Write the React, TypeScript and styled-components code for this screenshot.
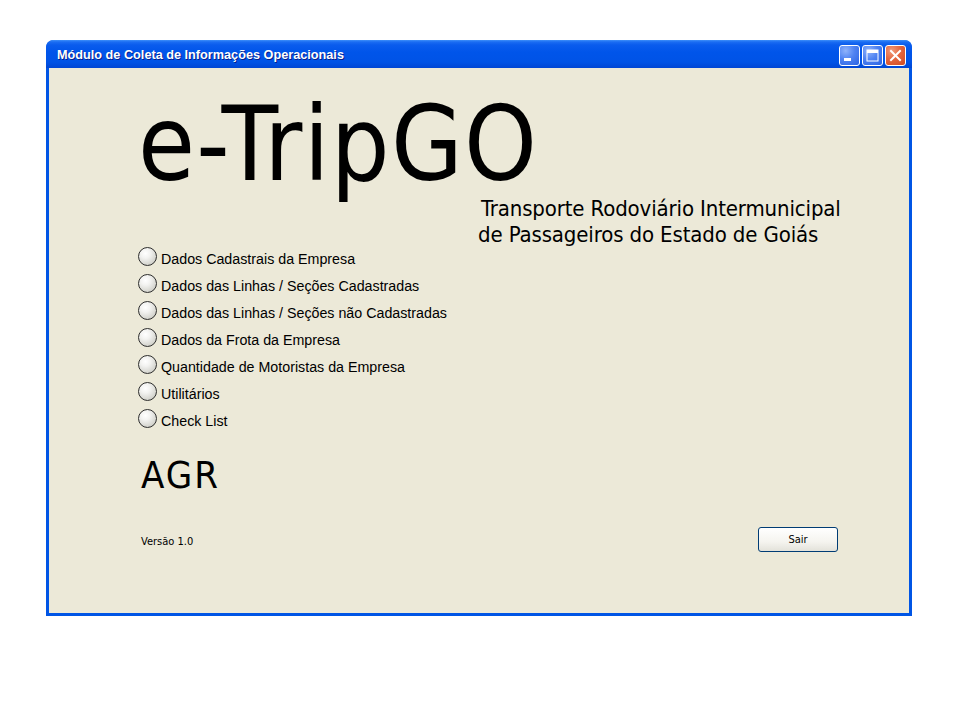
import React from "react";
import styled, { createGlobalStyle } from "styled-components";

const Global = createGlobalStyle`
  html, body { margin: 0; padding: 0; background: #ffffff; }
  body { font-family: "Liberation Sans", Arial, sans-serif; }
`;

const TAHOMA = `"DejaVu Sans Condensed", "DejaVu Sans", sans-serif`;

const Page = styled.div`
  padding: 40px 0 0 46px;
`;

const Window = styled.div`
  width: 866px;
  display: flex;
  flex-direction: column;
  border-radius: 8px 8px 0 0;
  background: #0054e3;
`;

const TitleBar = styled.div`
  height: 28px;
  display: flex;
  align-items: flex-start;
  justify-content: space-between;
  padding: 0 6px 0 11px;
  border-radius: 7px 7px 0 0;
  background: linear-gradient(
    to bottom,
    #3d8ff9 0px,
    #1a6cf2 2px,
    #0a5ced 5px,
    #0055ea 12px,
    #0053e6 22px,
    #0046d4 28px
  );
  box-sizing: border-box;
`;

const Title = styled.div`
  font-family: "Liberation Sans", Arial, sans-serif;
  font-weight: bold;
  font-size: 12.7px;
  line-height: 14px;
  padding-top: 8px;
  color: #ffffff;
  text-shadow: 1px 1px 0 #0a1e8a;
`;

const Controls = styled.div`
  display: flex;
  gap: 2px;
  padding-top: 5px;
`;

const CtrlButton = styled.div<{ $close?: boolean }>`
  width: 21px;
  height: 21px;
  box-sizing: border-box;
  border: 1px solid #ffffff;
  border-radius: 3px;
  display: flex;
  align-items: center;
  justify-content: center;
  background: ${(p) =>
    p.$close
      ? "radial-gradient(circle at 30% 25%, #f19b7b 0%, #e4663f 45%, #d04a21 100%)"
      : "radial-gradient(circle at 30% 25%, #8fb3fb 0%, #4f83f2 45%, #2b63e3 100%)"};
`;

const Frame = styled.div`
  border: 3px solid #0055e5;
  border-top: 0;
`;

const Client = styled.div`
  height: 545px;
  background: #ece9d8;
  box-sizing: border-box;
  padding: 25px 71px 0 89px;
  display: flex;
  flex-direction: column;
`;

const Brand = styled.div`
  font-family: ${TAHOMA};
  font-size: 103px;
  line-height: 103px;
  letter-spacing: 1.3px;
  color: #000000;
`;

const Subtitle = styled.div`
  margin-left: 340px;
  font-family: ${TAHOMA};
  font-size: 22px;
  line-height: 26px;
  letter-spacing: -0.13px;
  color: #000000;
`;

const SubLine = styled.div<{ $indent?: number }>`
  padding-left: ${(p) => p.$indent ?? 0}px;
  white-space: nowrap;
`;

const OptionList = styled.div`
  display: flex;
  flex-direction: column;
  margin-top: -1px;
`;

const Option = styled.label`
  height: 27px;
  display: flex;
  align-items: flex-start;
  gap: 4px;
  cursor: default;
`;

const RadioCircle = styled.span`
  width: 19px;
  height: 19px;
  box-sizing: border-box;
  border-radius: 50%;
  border: 1px solid #2e2e2e;
  background: radial-gradient(
    circle at 38% 32%,
    #ffffff 0%,
    #f3f3f1 30%,
    #d6d6d0 70%,
    #b8b8b0 100%
  );
  flex: none;
`;

const OptionText = styled.span`
  font-family: "Liberation Sans", Arial, sans-serif;
  font-size: 14.25px;
  line-height: 19px;
  padding-top: 3px;
  color: #000000;
  white-space: nowrap;
`;

const Agency = styled.div`
  margin-top: 20px;
  margin-left: 3px;
  font-family: ${TAHOMA};
  font-size: 38px;
  line-height: 38px;
  letter-spacing: 2px;
  color: #000000;
`;

const Footer = styled.div`
  margin-top: 33px;
  display: flex;
  align-items: center;
  justify-content: space-between;
`;

const Version = styled.div`
  margin-left: 3px;
  padding-top: 4px;
  font-family: ${TAHOMA};
  font-size: 11px;
  color: #000000;
`;

const ExitButton = styled.button`
  width: 80px;
  height: 25px;
  box-sizing: border-box;
  border: 1px solid #003c74;
  border-radius: 3px;
  background: linear-gradient(to bottom, #ffffff 0%, #f5f4ef 60%, #e3e2da 100%);
  font-family: ${TAHOMA};
  font-size: 11px;
  color: #000000;
  padding: 0;
  cursor: default;
`;

const options = [
  "Dados Cadastrais da Empresa",
  "Dados das Linhas / Seções Cadastradas",
  "Dados das Linhas / Seções não Cadastradas",
  "Dados da Frota da Empresa",
  "Quantidade de Motoristas da Empresa",
  "Utilitários",
  "Check List",
];

export default function App() {
  return (
    <>
      <Global />
      <Page>
        <Window>
          <TitleBar>
            <Title>Módulo de Coleta de Informações Operacionais</Title>
            <Controls>
              <CtrlButton>
                <svg width="19" height="19" viewBox="0 0 19 19">
                  <rect x="4" y="12" width="7" height="3" fill="#ffffff" />
                </svg>
              </CtrlButton>
              <CtrlButton>
                <svg width="19" height="19" viewBox="0 0 19 19">
                  <rect x="4" y="4" width="11" height="11" fill="none" stroke="#ffffff" strokeWidth="1" />
                  <rect x="4" y="4" width="11" height="3" fill="#ffffff" />
                </svg>
              </CtrlButton>
              <CtrlButton $close>
                <svg width="19" height="19" viewBox="0 0 19 19">
                  <path d="M5 5 L14 14 M14 5 L5 14" stroke="#ffffff" strokeWidth="2" strokeLinecap="square" />
                </svg>
              </CtrlButton>
            </Controls>
          </TitleBar>
          <Frame>
            <Client>
              <Brand>e-TripGO</Brand>
              <Subtitle>
                <SubLine $indent={3}>Transporte Rodoviário Intermunicipal</SubLine>
                <SubLine>de Passageiros do Estado de Goiás</SubLine>
              </Subtitle>
              <OptionList>
                {options.map((o) => (
                  <Option key={o}>
                    <RadioCircle />
                    <OptionText>{o}</OptionText>
                  </Option>
                ))}
              </OptionList>
              <Agency>AGR</Agency>
              <Footer>
                <Version>Versão 1.0</Version>
                <ExitButton>Sair</ExitButton>
              </Footer>
            </Client>
          </Frame>
        </Window>
      </Page>
    </>
  );
}
